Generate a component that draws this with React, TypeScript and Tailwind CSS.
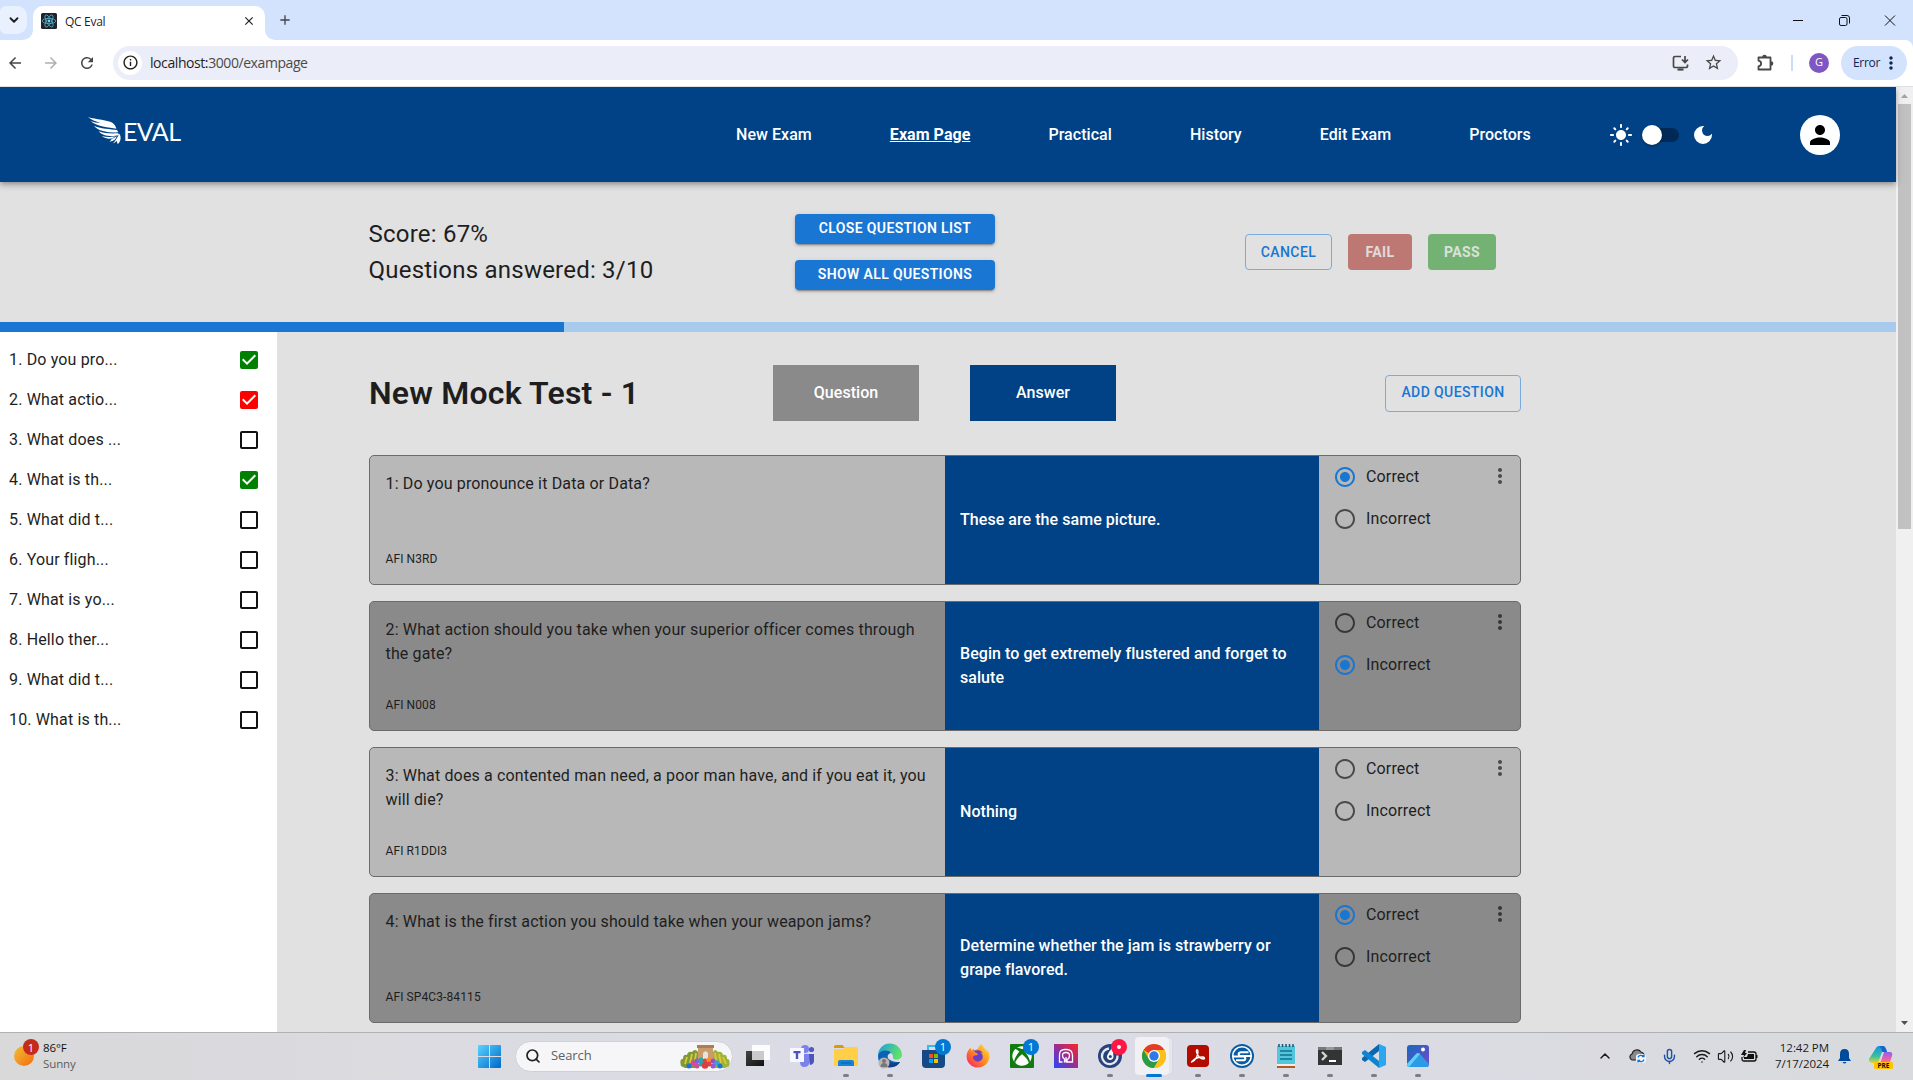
import React from "react";
import {
  MdArrowBack, MdArrowForward, MdRefresh, MdInfoOutline, MdStarBorder,
  MdMoreVert, MdLightMode, MdDarkMode, MdPerson, MdCheckBox, MdCheckBoxOutlineBlank, MdRadioButtonChecked,
  MdRadioButtonUnchecked, MdClose, MdAdd,
} from "react-icons/md";
import { FaXbox, FaFirefoxBrowser } from "react-icons/fa";
import { Search, ChevronUp, ChevronDown, Mic, Wifi, Volume2 } from "lucide-react";

const list: [string, string][] = [
  ["1. Do you pro...", "green"], ["2. What actio...", "red"], ["3. What does ...", ""], ["4. What is th...", "green"],
  ["5. What did t...", ""], ["6. Your fligh...", ""], ["7. What is yo...", ""], ["8. Hello ther...", ""],
  ["9. What did t...", ""], ["10. What is th...", ""],
];

const cards = [
  { q: "1: Do you pronounce it Data or Data?", afi: "AFI N3RD", a: "These are the same picture.", ok: true, bad: false },
  { q: "2: What action should you take when your superior officer comes through the gate?", afi: "AFI N008", a: "Begin to get extremely flustered and forget to salute", ok: false, bad: true },
  { q: "3: What does a contented man need, a poor man have, and if you eat it, you will die?", afi: "AFI R1DDI3", a: "Nothing", ok: false, bad: false },
  { q: "4: What is the first action you should take when your weapon jams?", afi: "AFI SP4C3-84115", a: "Determine whether the jam is strawberry or grape flavored.", ok: true, bad: false },
];

function Favicon() {
  return (
    <svg className="h-4 w-4 shrink-0" viewBox="0 0 16 16">
      <rect width="16" height="16" rx="1.5" fill="#20232a" />
      <g fill="none" stroke="#4fb3cc" strokeWidth="0.8">
        <ellipse cx="8" cy="8" rx="6.8" ry="2.6" />
        <ellipse cx="8" cy="8" rx="6.8" ry="2.6" transform="rotate(60 8 8)" />
        <ellipse cx="8" cy="8" rx="6.8" ry="2.6" transform="rotate(120 8 8)" />
      </g>
      <circle cx="8" cy="8" r="1.4" fill="#61dafb" />
    </svg>
  );
}

function BrowserChrome() {
  return (
    <div className="h-[87px] shrink-0 bg-[#d3e3fd] font-['Open_Sans',sans-serif]">
      <div className="flex h-10 items-end">
        <div className="mb-[6px] flex h-7 w-[27px] items-center justify-center rounded-r-[10px] rounded-l-[6px] bg-[#e9f1fe]">
          <ChevronDown className="h-[14px] w-[14px] text-[#1f1f1f]" strokeWidth={3.2} />
        </div>
        <div className="relative ml-[6px] flex h-[34px] w-[232px] items-center rounded-t-[10px] bg-white pl-2 pr-[9px] pb-[6px] pt-[2px]">
          <svg className="absolute bottom-0 -left-[10px] h-[10px] w-[10px]" viewBox="0 0 10 10"><path d="M10 0v10H0A10 10 0 0 0 10 0" fill="#fff" /></svg>
          <svg className="absolute bottom-0 -right-[10px] h-[10px] w-[10px]" viewBox="0 0 10 10"><path d="M0 0v10h10A10 10 0 0 1 0 0" fill="#fff" /></svg>
          <Favicon />
          <span className="ml-2 pt-px text-[12px] tracking-[-0.3px] text-[#1f1f1f]">QC Eval</span>
          <MdClose className="ml-auto h-[14px] w-[14px] text-[#1f1f1f]" />
        </div>
        <MdAdd className="mb-[12px] ml-[12px] h-4 w-4 text-[#444]" />
        <div className="ml-auto flex h-10 items-center pr-[17px]">
          <svg className="h-[11px] w-[103px]" viewBox="0 0 103 11" fill="none" stroke="#111" strokeWidth="1">
            <path d="M0 5.5h10M92 .5l10 10M102 .5l-10 10" />
            <rect x="46.500" y="2.500" width="7.500" height="8" rx="1.500" />
            <path d="M48.500 .5h5.500a2.500 2.500 0 0 1 2.500 2.500v5.500" />
          </svg>
        </div>
      </div>
      <div className="flex h-[47px] items-center rounded-tr-[8px] border-b border-[#dcdfe3] bg-white pr-[6px] pb-px text-[#474747]">
        <MdArrowBack className="ml-[6px] h-[18px] w-[18px]" />
        <MdArrowForward className="ml-[18px] h-[18px] w-[18px] text-[#b0b0b0]" />
        <MdRefresh className="ml-[18px] h-[18px] w-[18px]" />
        <div className="ml-[17px] flex h-[34px] flex-1 items-center rounded-full bg-[#ebeef8] pl-[5px] pr-[15px]">
          <div className="flex h-6 w-6 items-center justify-center rounded-full bg-white"><MdInfoOutline className="h-[17px] w-[17px] text-[#1f1f1f]" /></div>
          <span className="ml-2 text-[14px] tracking-[-0.42px] text-[#4a4a4a]"><span className="text-[#1f1f1f]">localhost:</span>3000/exampage</span>
          <svg className="ml-auto h-4 w-[17px]" viewBox="0 0 17 16" fill="none" stroke="#474747" strokeWidth="1.700">
            <path d="M9 1.500H3A1.500 1.500 0 0 0 1.500 3v8A1.500 1.500 0 0 0 3 12.500h11a1.500 1.500 0 0 0 1.500-1.500v-1.500M13 1v6M10 4.500l3 3 3-3" />
            <path d="M5.500 14.500h6" strokeWidth="2.200" />
          </svg>
          <MdStarBorder className="ml-[15px] h-[19px] w-[19px]" />
        </div>
        <svg className="ml-[18px] h-[18px] w-[18px]" viewBox="0 0 18 18">
          <path d="M2.500 3.500h12v12h-12v-3.200c3.500-.6 3.500-5 0-5.600z" fill="none" stroke="#474747" strokeWidth="1.800" strokeLinejoin="round" />
          <path d="M6.200 3a2.300 2.300 0 0 1 4.600 0zM15 7.200a2.300 2.300 0 0 1 0 4.600z" fill="#474747" />
        </svg>
        <div className="ml-[17px] h-4 w-[2px] bg-[#c9dcfb]" />
        <div className="ml-4 flex h-5 w-5 items-center justify-center rounded-full bg-[#7e57c2] text-[11px] text-white">G</div>
        <div className="ml-3 flex h-[34px] w-[66px] items-center rounded-full bg-[#d3e3fd] pl-3 text-[12px] tracking-[-0.3px] text-[#0b2458]">
          Error<MdMoreVert className="ml-px h-[20px] w-[20px]" />
        </div>
      </div>
    </div>
  );
}

function Logo() {
  return (
    <div className="flex w-[647px] items-center text-white">
      <svg className="-mt-2 h-[28px] w-[34px]" viewBox="0 0 102 84" fill="#fff">
        <path d="M0 0C22 8 62 8 75 19C82 25 84 31 85 35C66 32 22 28 8 12C15 15 28 18 38 18C24 14 8 8 0 0Z" />
        <path d="M18 26C34 35 70 36 87 39L91 46C66 47 30 44 18 26Z" />
        <path d="M32 43C48 50 72 50 91 49L93 55C70 60 44 58 32 43Z" />
        <path d="M41 57C54 61 72 61 82 57C76 66 58 70 41 57Z" />
        <path d="M71 65C79 64 82 60 86 57C84 67 77 73 64 74C68 71 70 68 71 65Z" />
        <path d="M94 50C101 60 98 74 89 82C89 77 86 75 86 71C82 76 79 78 75 79C82 72 88 61 94 50Z" />
      </svg>
      <span className="-mt-[7px] ml-px font-[Lato] text-[25px] leading-none tracking-[-0.6px]">EVAL</span>
    </div>
  );
}

function Header() {
  const links = ["New Exam", "Exam Page", "Practical", "History", "Edit Exam", "Proctors"];
  return (
    <header className="relative flex h-[95px] shrink-0 items-center bg-[#004285] pl-[88px] text-white shadow-[0_2px_4px_-1px_rgba(0,0,0,0.2),0_4px_5px_rgba(0,0,0,0.14),0_1px_10px_rgba(0,0,0,0.12)]">
      <Logo />
      <nav className="ml-px flex gap-[78px] text-[16px] leading-6 font-medium tracking-[0.05px] whitespace-nowrap">
        {links.map((l) => (
          <a key={l} className={l === "Exam Page" ? "font-bold underline" : ""}>{l}</a>
        ))}
      </nav>
      <div className="ml-auto flex w-[287px] items-center pt-px">
        <MdLightMode className="h-6 w-6" />
        <div className="relative ml-[13px] h-[14px] w-[33px] rounded-full bg-[#002a55]">
          <div className="absolute -top-[3px] -left-[4px] h-5 w-5 rounded-full bg-white shadow-[0_1px_3px_rgba(0,0,0,0.4)]" />
        </div>
        <MdDarkMode className="ml-3 h-6 w-6" />
        <div className="ml-[85px] flex h-10 w-10 items-center justify-center rounded-full bg-white"><MdPerson className="h-[30px] w-[30px] text-black" /></div>
      </div>
    </header>
  );
}

function ScoreBar() {
  const primary = "flex h-[30px] items-center justify-center rounded-[4px] bg-[#1976d2] pb-[2px] font-semibold tracking-[0.36px] text-white shadow-[0_3px_1px_-2px_rgba(0,0,0,0.2),0_2px_2px_rgba(0,0,0,0.14),0_1px_5px_rgba(0,0,0,0.12)]";
  return (
    <section className="flex h-[140px] shrink-0 items-center text-[14px] font-medium tracking-[0.4px]">
      <div className="w-[795px] pl-[368.500px] text-[24px] leading-9 font-normal tracking-[0.22px]">
        <p>Score: 67%</p>
        <p>Questions answered: 3/10</p>
      </div>
      <div className="flex w-[200px] flex-col gap-4">
        <button className={primary}>CLOSE QUESTION LIST</button>
        <button className={primary}>SHOW ALL QUESTIONS</button>
      </div>
      <div className="ml-[250px] flex gap-4">
        <button className="h-9 w-[87px] rounded-[4px] border border-[#7aabe0] pb-px text-[#1976d2]">CANCEL</button>
        <button className="h-9 w-16 rounded-[4px] bg-[#bd7874] pb-px font-bold text-[#e1dada]">FAIL</button>
        <button className="h-9 w-[68px] rounded-[4px] bg-[#74b274] pb-px font-bold text-[#dae1da]">PASS</button>
      </div>
    </section>
  );
}

function Choice({ on, label }: { on: boolean; label: string }) {
  return (
    <div className="flex h-[42px] items-center">
      {on ? <MdRadioButtonChecked className="h-6 w-6 text-[#1976d2]" /> : <MdRadioButtonUnchecked className="h-6 w-6 text-black/60" />}
      <span className="ml-[9px]">{label}</span>
    </div>
  );
}

function Content() {
  return (
    <main className="w-[1244px] pt-[33px] pl-[92px]">
      <div className="flex h-14 items-center">
        <h1 className="w-[404px] text-[32px] leading-none font-semibold tracking-[0.2px]">New Mock Test - 1</h1>
        <div className="flex h-14 w-[146px] items-center justify-center bg-[#8a8a8a] font-medium tracking-[0.05px] text-white">Question</div>
        <div className="ml-[51px] flex h-14 w-[146px] items-center justify-center bg-[#004285] font-medium tracking-[0.05px] text-white">Answer</div>
        <button className="ml-auto h-[37px] w-[136px] rounded-[4px] border border-[#7aabe0] pb-[2px] text-[14px] font-medium tracking-[0.4px] text-[#1976d2]">ADD QUESTION</button>
      </div>
      <div className="mt-[34px] flex flex-col gap-4">
        {cards.map((c, i) => (
          <article key={c.q} className={"flex h-[130px] overflow-hidden rounded-[5px] border border-[#6b6b6b] " + (i % 2 ? "bg-[#8a8a8a]" : "bg-[#b8b8b8]")}>
            <div className="flex w-[575px] flex-col justify-between pt-4 pr-4 pb-[15px] pl-[15.500px]">
              <p>{c.q}</p>
              <p className="text-[12px] leading-5 tracking-[0.1px]">{c.afi}</p>
            </div>
            <div className="flex w-[374px] items-center bg-[#004285] pl-[15px] pr-4 font-medium tracking-[0.055px] text-white"><p>{c.a}</p></div>
            <div className="flex flex-1 items-start justify-between pl-[14px]">
              <div>
                <Choice on={c.ok} label="Correct" />
                <Choice on={c.bad} label="Incorrect" />
              </div>
              <MdMoreVert className="mt-2 mr-2 h-6 w-6 text-black/60" />
            </div>
          </article>
        ))}
      </div>
    </main>
  );
}

function Page() {
  return (
    <div className="flex h-[945px] overflow-hidden bg-[#e1e1e1] font-[Roboto] text-[16px] leading-6 tracking-[0.15px] text-[#1e1e1e]">
      <div className="flex w-[1896px] flex-col">
        <Header />
        <ScoreBar />
        <div className="h-[10px] shrink-0 bg-[#a7caed]"><div className="h-full w-[564px] bg-[#1976d2]" /></div>
        <div className="flex h-[700px]">
          <aside className="w-[277px] bg-white pt-2 pr-[16px] pl-[9px]">
            {list.map(([t, c]) => (
              <div key={t} className="flex h-10 items-center justify-between">
                <span>{t}</span>
                {c ? <MdCheckBox className={c === "green" ? "h-6 w-6 text-[#008000]" : "h-6 w-6 text-[#ff0000]"} /> : <MdCheckBoxOutlineBlank className="h-6 w-6 text-[#111]" />}
              </div>
            ))}
          </aside>
          <Content />
        </div>
      </div>
      <div className="flex w-[17px] flex-col items-center bg-[#f0f0f0]">
        <svg className="h-[17px] w-[17px]" viewBox="0 0 17 17"><path d="M5 11l3.500-4 3.500 4z" fill="#a3a3a3" /></svg>
        <div className="h-[425px] w-[13px] bg-[#c1c1c1]" />
        <svg className="mt-auto h-[17px] w-[17px]" viewBox="0 0 17 17"><path d="M5 6l3.500 4L12 6z" fill="#505050" /></svg>
      </div>
    </div>
  );
}

function Slot({ children, dot, badge, active }: { children: React.ReactNode; dot?: boolean; badge?: React.ReactNode; active?: boolean }) {
  return (
    <div className="relative flex h-12 w-11 items-center justify-center">
      {active && <div className="absolute top-1 left-[3px] h-[38px] w-[38px] rounded-[4px] border border-[#d6d7df] bg-[#e6e6ec]" />}
      {active && <div className="absolute top-1 left-[3px] h-[38px] w-[34px] rounded-[4px] bg-[#f0f0f5]" />}
      <svg className="relative -top-px h-6 w-6 overflow-visible" viewBox="0 0 24 24">{children}</svg>
      {badge}
      {(dot || active) && <div className={active ? "absolute bottom-1 h-[3px] w-4 rounded-full bg-[#0078d4]" : "absolute bottom-1 h-[3px] w-[6px] rounded-full bg-[#7d7d82]"} />}
    </div>
  );
}

function Badge({ children, red }: { children: React.ReactNode; red?: boolean }) {
  return <div className={"absolute top-[6px] left-[23px] flex h-4 w-4 items-center justify-center rounded-full text-[11px] leading-none text-white " + (red ? "bg-[#ff1744]" : "bg-[#0078d4]")}>{children}</div>;
}

function Monument() {
  const colors = ["#1976d2", "#d946a0", "#8e5bd6", "#26a6b5", "#d84545", "#ff8a1f", "#9c4ad8", "#2aa7d8"];
  const balls = [[9, 22], [13, 19], [17, 17], [21, 16], [25, 17], [29, 16], [33, 17], [37, 19], [40, 22], [17, 22], [33, 22], [21, 20], [29, 20]];
  return (
    <svg className="h-[25px] w-[50px]" viewBox="0 0 50 25">
      <path d="M1 22Q-1 14 3 15Q3 10 7 11Q8 7 12 8Q15 4 18 8V24H5Z" fill="#7d9a35" />
      <path d="M49 22Q51 14 47 15Q47 10 43 11Q42 7 38 8Q35 4 33 8V24H45Z" fill="#9db23b" />
      <path d="M5 20l2-7M10 19l2-9M15 16l1-7M36 16l-1-7M41 19l-2-9M46 20l-3-7" stroke="#e2c637" strokeWidth="1.800" />
      <path d="M17 1h17v3h-1v13H18V4h-1z" fill="#c99c6e" />
      <path d="M17 1h17v3H17z" fill="#ad7f50" />
      <path d="M23 16V9q2.500-3.500 5 0v7z" fill="#e9e2da" />
      {balls.map(([x, y], i) => <circle key={i} cx={x} cy={y} r="2.500" fill={colors[i % 8]} />)}
      <circle cx="25" cy="21.500" r="3.300" fill="#d94040" />
    </svg>
  );
}

function Taskbar() {
  return (
    <div className="flex h-12 items-center border-t border-[#b0b0b5] bg-gradient-to-r from-[#d9d9da] via-[#dcdce8] to-[#d9dadd] font-['Open_Sans',sans-serif]">
      <div className="flex w-[474px] items-center">
        <div className="relative ml-[14px] mb-px h-5 w-5 rounded-full bg-gradient-to-br from-[#efbd35] to-[#f26a0a]">
          <div className="absolute -top-[7px] left-[9px] flex h-4 w-4 items-center justify-center rounded-full bg-[#c42b1c] text-[11px] leading-none text-white">1</div>
        </div>
        <div className="-mt-[2px] ml-[9px] text-[11.5px] leading-4 tracking-[-0.1px] text-[#111]">
          <p>86°F</p><p className="text-[#5c5c60]">Sunny</p>
        </div>
      </div>
      <svg className="ml-[4px] h-[23px] w-[23px]" viewBox="0 0 23 23">
        <defs><linearGradient id="win" x2="1" y2="1"><stop stopColor="#58d3ff" /><stop offset="1" stopColor="#0067c8" /></linearGradient></defs>
        <path d="M1 0h10v11H0V1q0-1 1-1M12 0h10q1 0 1 1v10H12zM0 12h11v11H1q-1 0-1-1zM12 12h11v10q0 1-1 1H12z" fill="url(#win)" />
      </svg>
      <div className="-mt-px ml-[14px] flex h-[31px] w-[218px] items-center rounded-full border border-[#d0d0d5] bg-[#f6f6f9] pl-[9px] pr-[2px]">
        <Search className="h-4 w-4 text-[#222]" strokeWidth={2.600} />
        <span className="ml-[10px] text-[13px] tracking-[-0.1px] text-[#606060]">Search</span>
        <span className="ml-auto"><Monument /></span>
      </div>
      <div className="ml-[3px] flex">
        <Slot>
          <defs><linearGradient id="tv" x2="1" y2="1"><stop stopColor="#444" /><stop offset="1" stopColor="#111" /></linearGradient></defs>
          <path d="M0 7h18v15H0z" fill="url(#tv)" /><path d="M6 1h18v15H6z" fill="#fff" fillOpacity="0.9" /><path d="M6 7h12v9H6z" fill="#cacacd" />
        </Slot>
        <Slot>
          <circle cx="15" cy="5" r="4" fill="#7b83eb" /><circle cx="21.500" cy="5.500" r="2.600" fill="#5059c9" />
          <path d="M10 10h10v8q-1 5-6 5-4 0-4-5z" fill="#7b83eb" /><path d="M19 10h5v7q0 3-4 4z" fill="#4b53bc" />
          <rect y="4" width="14" height="14" fill="#f7f7ff" /><path d="M3.500 7h7v2.300H8.200V15H5.800V9.300H3.500z" fill="#4b53bc" />
        </Slot>
        <Slot dot>
          <path d="M0 2.500Q0 1 1.500 1h7L11 4H0z" fill="#d99a06" /><path d="M0 5h9l2-2h11.500Q24 3 24 4.500V22H0z" fill="#ffcf48" />
          <path d="M4 18q0-2 2-2h12q2 0 2 2v4H4z" fill="#1683d8" /><path d="M7 19h10" stroke="#0b5ea8" />
        </Slot>
        <Slot dot>
          <defs><linearGradient id="ed" x2="1" y2="0.300"><stop stopColor="#1d9be0" /><stop offset="1" stopColor="#5fe06a" /></linearGradient></defs>
          <path d="M0 12A12 12 0 0 1 24 11c0 5-8 6-9 3 1-5-5-9-15-2" fill="url(#ed)" />
          <path d="M0 12c1-6 10-7 13-3-5 1-6 9 9 9-5 8-22 8-22-6" fill="#0c62b5" /><path d="M9 14c1 5 7 6 13 4-3 5-9 6-12 5" fill="#123f87" />
          <circle cx="6" cy="19" r="5.500" fill="#b9b5b2" /><circle cx="6" cy="17" r="2" fill="#777" /><path d="M2.500 23q0-4 3.500-4t3.500 4" fill="#777" />
        </Slot>
        <Slot badge={<Badge>1</Badge>}>
          <path d="M6 7V2h9" fill="none" stroke="#35b8f2" strokeWidth="2" /><path d="M0 6h23v14q0 4-4 4H4q-4 0-4-4z" fill="#164a86" />
          <path d="M7 10h4v4H7z" fill="#f25022" /><path d="M12 10h4v4h-4z" fill="#7fba00" /><path d="M7 15h4v4H7z" fill="#00a4ef" /><path d="M12 15h4v4h-4z" fill="#ffb900" />
        </Slot>
        <Slot>
          <defs><linearGradient id="ff" x1="1" x2="0" y2="1"><stop stopColor="#ffe83e" /><stop offset="0.500" stopColor="#ff8a20" /><stop offset="1" stopColor="#f5156c" /></linearGradient></defs>
          <circle cx="12" cy="13" r="7.500" fill="#6b3fc5" /><FaFirefoxBrowser x="0" y="0" size="24" fill="url(#ff)" />
        </Slot>
        <Slot badge={<Badge>1</Badge>}><rect width="24" height="24" rx="1" fill="#107c10" /><FaXbox x="2" y="2" size="20" fill="#fff" /></Slot>
        <Slot>
          <defs><linearGradient id="pu" x1="0" y1="1" x2="1" y2="0"><stop stopColor="#2448ff" /><stop offset="0.500" stopColor="#9a2d94" /><stop offset="1" stopColor="#ff2420" /></linearGradient></defs>
          <rect width="24" height="24" fill="url(#pu)" />
          <path d="M8.500 18H5.500v-7Q5.500 5.500 11 5.500h1.500q6 0 6 6V18H13v-2.500q2.500-.8 2.500-4Q15.500 8.500 12 8.500t-3.500 3q0 2.500 2 3.500v3.500M12 18.500v-5.500" fill="none" stroke="#fff" strokeWidth="1.300" />
        </Slot>
        <Slot dot badge={<Badge red><span className="h-1 w-1 rounded-full bg-white" /></Badge>}>
          <circle cx="12" cy="12" r="12" fill="#28427b" /><path d="M11 4.500a7.800 7.800 0 1 0 8.500 7" fill="none" stroke="#e6e9f2" strokeWidth="2.300" /><path d="M14 4q-4 5-5 8a3.300 3.300 0 1 0 6.500 1q0-4-1.500-9" fill="#f4f5f9" /><circle cx="12.300" cy="12.500" r="1.500" fill="#28427b" />
        </Slot>
        <Slot active>
          <circle cx="12" cy="12" r="12" fill="#fbbc04" /><path d="M12 12L1.600 6A12 12 0 0 1 22.400 6H12z" fill="#e33b2e" />
          <path d="M1.600 6A12 12 0 0 0 12 24l5.200-9H6.800z" fill="#2a9b47" /><path d="M22.400 6H12l5.200 9L12 24A12 12 0 0 0 22.400 6" fill="#fbc116" />
          <circle cx="12" cy="12" r="6" fill="#fff" /><circle cx="12" cy="12" r="4.700" fill="#2f78e8" />
        </Slot>
        <Slot dot>
          <rect x="1" y="1" width="22" height="22" rx="4" fill="#b30b00" /><path d="M6 18c4-2 6-7 6-10 0-3-2-3-1.500 0 1 4 4 7 7 7 2 0 1-2-1-2-4 0-8 2-10 4-1 1-1.500 1-.5 1" fill="none" stroke="#fff" strokeWidth="1.300" />
        </Slot>
        <Slot dot>
          <circle cx="12" cy="12" r="12" fill="#075ca3" /><circle cx="12" cy="12" r="9.300" fill="none" stroke="#fff" strokeWidth="1.600" />
          <path d="M18.500 8.200H11c-3 0-3 3.300-.5 3.800H21M3 12.500h10.500c2.500.5 2.500 3.800-.5 3.800H6" fill="none" stroke="#fff" strokeWidth="2" />
        </Slot>
        <Slot dot>
          <path d="M3 2h18v20H3z" fill="#53c5dd" /><path d="M3 21h18v3H3z" fill="#b35a1d" /><path d="M3 20h18v2H3z" fill="#f4eee8" />
          <path d="M6 7h12M6 11h12M6 15h12" stroke="#13728c" strokeWidth="1.400" /><path d="M5 0v3M8.500 0v3M12 0v3M15.500 0v3M19 0v3" stroke="#1c566b" strokeWidth="1.500" />
        </Slot>
        <Slot dot>
          <path d="M0 4q0-1 1-1h22q1 0 1 1v17H0z" fill="#333436" /><path d="M0 4q0-1 1-1h22q1 0 1 1v2H0z" fill="#777" /><path d="M8 3h8v3H8z" fill="#999" />
          <path d="M4 8l4 4-4 4" fill="none" stroke="#d7d7d7" strokeWidth="2.300" /><path d="M11 17h7" stroke="#fff" strokeWidth="2" />
        </Slot>
        <Slot dot>
          <path d="M17 0l7 3v18l-7 3z" fill="#2ba7ef" /><path d="M17 0v7L3 18l-3-2v-2z" fill="#0a67b0" /><path d="M17 24v-7L3 6 0 8v2z" fill="#0d86d2" />
        </Slot>
        <Slot dot>
          <defs><linearGradient id="ph" x2="1" y2="1"><stop stopColor="#1469bd" /><stop offset="1" stopColor="#7b48ca" /></linearGradient></defs>
          <rect x="1" y="1" width="22" height="22" rx="3" fill="url(#ph)" /><path d="M1 20l9-10q2-2 4 0l9 10q0 3-3 3H4q-3 0-3-3" fill="#2b9be5" /><path d="M1 20l9-10q2-2 4 0L3 23q-2-1-2-3" fill="#60d0fa" /><circle cx="17" cy="5.500" r="2" fill="#fff" />
        </Slot>
      </div>
      <div className="-mt-px ml-auto flex items-center pr-5 text-[#1a1a1a]">
        <ChevronUp className="h-4 w-4" strokeWidth={2.200} />
        <svg className="ml-4 h-4 w-[17px]" viewBox="0 0 17 16">
          <path d="M3 12a3.200 3.200 0 0 1 0-6A5 5 0 0 1 12 4a4 4 0 0 1 3 5l-2 3z" fill="#88898c" stroke="#222" strokeWidth="1.200" />
          <rect x="7" y="6" width="10" height="9" rx="3" fill="#f4f7fb" /><path d="M9 9.500a3.200 3.200 0 0 1 5.500-1M15 11.500a3.200 3.200 0 0 1-5.500 1M15 6.500v2.200h-2.200M9 14.500v-2.200h2.200" fill="none" stroke="#1673d1" strokeWidth="1.300" />
        </svg>
        <Mic className="ml-[15px] h-[17px] w-[17px] text-[#1b53a5]" />
        <Wifi className="ml-[15px] h-[18px] w-[18px]" strokeWidth={1.900} />
        <Volume2 className="ml-[6px] h-[17px] w-[17px]" strokeWidth={1.600} />
        <svg className="ml-[7px] h-3 w-[17px]" viewBox="0 0 17 12"><path d="M7 2h6q2 0 2 2v5q0 2-2 2H3q-2 0-2-2V7" fill="none" stroke="#111" strokeWidth="1.300" /><path d="M7 4h6v5H3V7h3zM15 5h1.500v3H15zM3 0L0 5h3L2 8l4-5H4l1-3z" fill="#111" /></svg>
        <div className="-mt-px w-[71px] text-right text-[11.500px] leading-4 tracking-[-0.05px] whitespace-nowrap"><p>12:42 PM</p><p>7/17/2024</p></div>
        <svg className="ml-[9px] h-[15px] w-[13px]" viewBox="0 0 13 15"><path d="M6.500 0Q11 0 11 5v4l2 3H0l2-3V5Q2 0 6.500 0M4.500 13h4q-2 3-4 0" fill="#004a9c" /></svg>
        <svg className="mt-[3px] ml-[18px] h-6 w-6" viewBox="0 0 24 24">
          <defs>
            <linearGradient id="c1" x2="0" y2="1"><stop stopColor="#1691e8" /><stop offset="0.600" stopColor="#37bfa0" /><stop offset="1" stopColor="#e9d22c" /></linearGradient>
            <linearGradient id="c2" x2="0" y2="1"><stop stopColor="#8b62f2" /><stop offset="0.500" stopColor="#e95fae" /><stop offset="1" stopColor="#ff8958" /></linearGradient>
          </defs>
          <path d="M7 2q1-2 3-2h4q2 0 3 3l1 3h-5L9 17H3q-4-1-3-4z" fill="url(#c1)" /><path d="M15 6h6q3 0 2 4l-3 9H9q2 0 3-4z" fill="url(#c2)" /><path d="M10 0h4q2 0 3 3l1 3h-5q0-4-3-6" fill="#1764d0" />
          <rect x="5" y="16" width="19" height="7" rx="1.500" fill="#ffc400" />
          <text x="14.500" y="22" textAnchor="middle" fontSize="6.500" fontWeight="700" fill="#111">PRE</text>
        </svg>
      </div>
    </div>
  );
}

export default function App() {
  return (
    <div className="flex h-[1080px] w-[1913px] flex-col overflow-hidden">
      <BrowserChrome />
      <Page />
      <Taskbar />
    </div>
  );
}
